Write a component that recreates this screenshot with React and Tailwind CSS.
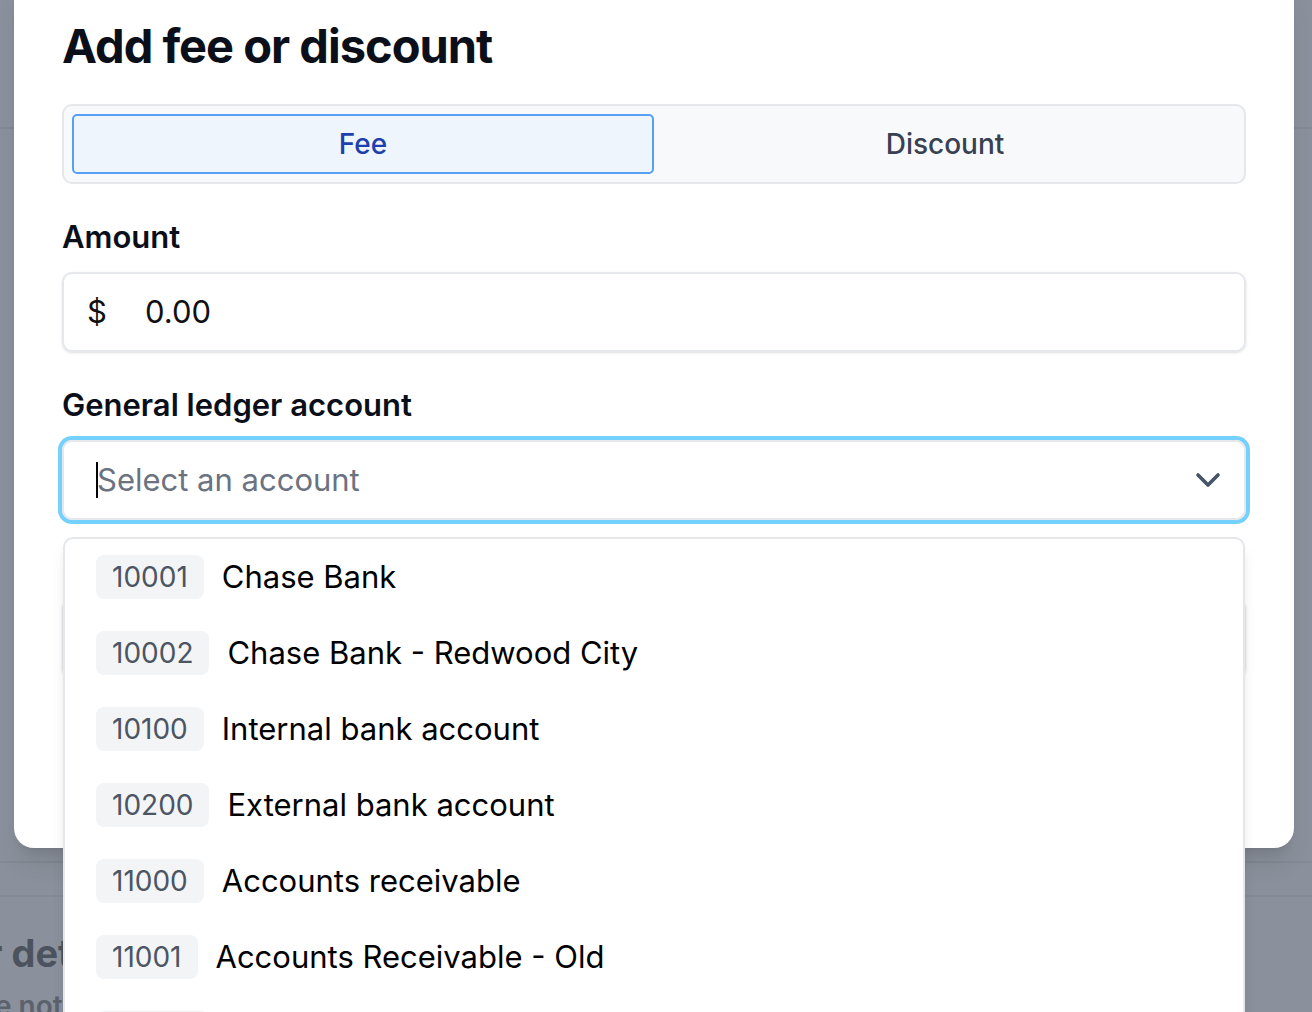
import { ChevronDown } from "lucide-react";

// accounts shown in the open ledger dropdown
const accounts = [
  { code: "10001", name: "Chase Bank" },
  { code: "10002", name: "Chase Bank - Redwood City" },
  { code: "10100", name: "Internal bank account" },
  { code: "10200", name: "External bank account" },
  { code: "11000", name: "Accounts receivable" },
  { code: "11001", name: "Accounts Receivable - Old" },
  { code: "12000", name: "Inventory" },
];

function FieldLabel({ children }) {
  return (
    <div className="mt-[35px] mb-[17px] text-[31px] leading-[36px] font-semibold text-[#0b0f19]">
      {children}
    </div>
  );
}

function AccountMenu() {
  return (
    <div className="absolute left-[1px] right-[1px] top-[97px] z-20 rounded-[10px] border-2 border-[#e5e7eb] bg-white shadow-lg">
      {accounts.map((account) => (
        <div key={account.code} className="flex h-[76px] items-center gap-[18px] px-[31px]">
          <span className="flex h-[44px] items-center rounded-lg bg-[#f3f4f6] px-[16px] text-[28px] text-[#4b5563]">
            {account.code}
          </span>
          <span className="text-[31px] text-black">{account.name}</span>
        </div>
      ))}
    </div>
  );
}

function FeeModal() {
  return (
    <div className="absolute left-[14px] right-[18px] top-[-24px] z-10 rounded-[20px] bg-white px-[48px] pt-[40px] pb-[48px] shadow-xl">
      <h1 className="text-[47px] leading-[60px] font-bold tracking-[-1px] text-[#0b0f19]">
        Add fee or discount
      </h1>

      {/* fee / discount toggle */}
      <div className="mt-[28px] grid h-[80px] grid-cols-2 rounded-[10px] border-2 border-[#e5e7eb] bg-[#f8f9fb] p-[8px]">
        <button className="flex items-center justify-center rounded-[5px] border-2 border-[#58a0f6] bg-[#eef5fd] text-[28px] font-medium text-[#1e40af]">
          Fee
        </button>
        <button className="flex items-center justify-center text-[28px] font-medium text-[#374151]">
          Discount
        </button>
      </div>

      <FieldLabel>Amount</FieldLabel>
      <div className="flex h-[80px] items-center rounded-[10px] border-2 border-[#e5e7eb] pl-[23px] text-[31px] text-[#111] shadow-sm">
        <span className="w-[58px]">$</span>
        <span>0.00</span>
      </div>

      <FieldLabel>General ledger account</FieldLabel>
      <div className="relative">
        <div className="flex h-[80px] items-center justify-between rounded-[10px] border-2 border-[#e5e7eb] pl-[32px] pr-[16px] ring-4 ring-[#74d0fd]">
          <div className="flex items-center">
            <span className="mr-[-1px] h-[36px] w-[2px] bg-black" />
            <span className="text-[31px] text-[#6b7280]">Select an account</span>
          </div>
          <ChevronDown className="h-[40px] w-[40px] text-[#475569]" strokeWidth={2.2} />
        </div>
        <AccountMenu />
      </div>

      {/* fields hidden behind the open menu */}
      <div className="mt-[78px] h-[80px] rounded-[10px] border-2 border-[#e5e7eb] shadow-sm" />
      <div className="mt-[42px] h-[80px]" />
    </div>
  );
}

export default function App() {
  return (
    <div className="relative h-[1012px] w-full overflow-hidden bg-[#8b919c] font-['Inter',sans-serif]">
      {/* page behind the backdrop */}
      <div className="flex flex-col">
        <div className="h-[129px] border-b-2 border-[#838995]" />
        <div className="h-[734px] border-b-2 border-[#838995]" />
        <div className="h-[34px] border-b-2 border-[#858b96]" />
        <div className="ml-[-13px] mt-[34px] text-[38px] leading-[44px] font-bold text-[#4d535e]">
          r details
        </div>
        <div className="ml-[-5px] mt-[14px] text-[28px] leading-[34px] font-semibold text-[#5c626d]">
          e notes
        </div>
      </div>
      <FeeModal />
    </div>
  );
}
